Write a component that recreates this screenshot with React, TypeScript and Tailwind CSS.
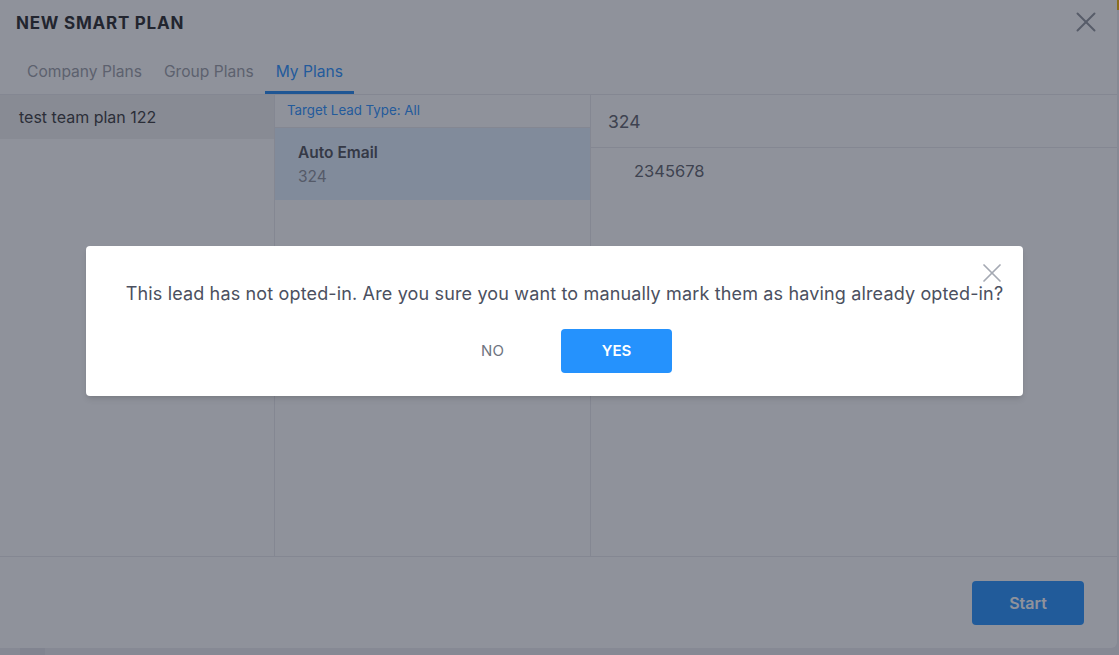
import { X } from "lucide-react";

const tabs = ["Company Plans", "Group Plans", "My Plans"];

export default function App() {
  return (
    <div className="relative h-[655px] w-[1119px] overflow-hidden bg-[#ededf1] font-['Inter',sans-serif]">
      {/* page behind the plan modal */}
      <div className="absolute right-0 top-0 h-[10px] w-[2px] bg-[#f0b400]" />
      <div className="absolute bottom-0 left-[20px] h-[7px] w-[25px] bg-[#e2e2e8]" />

      {/* plan modal */}
      <div className="flex h-[648px] w-[1117px] flex-col rounded-br-md bg-white">
        <header className="flex h-[44px] items-center justify-between pl-4 pr-[14px]">
          <h1 className="pt-[3px] text-[17px] font-bold tracking-[0.045em] text-[#252527]">NEW SMART PLAN</h1>
          <X className="h-[34px] w-[34px] text-[#8f939b]" strokeWidth={1.4} />
        </header>

        <nav className="flex h-[51px] border-b border-[#e8e8ec] pl-4">
          {tabs.map((t) => {
            const active = t === "My Plans";
            return (
              <div
                key={t}
                className={
                  active
                    ? "flex h-full items-center border-b-[3px] border-[#1f86f0] px-[11px] pt-[8px] text-[15.6px] text-[#2790ff]"
                    : "flex h-full items-center border-b-[3px] border-transparent px-[11px] pt-[8px] text-[15.6px] text-[#9a9ca5]"
                }
              >
                {t}
              </div>
            );
          })}
        </nav>

        <section className="flex flex-1 border-b border-[#e8e8ec]">
          <div className="w-[275px] border-r border-[#e8e8ec]">
            <div className="flex h-[44px] items-center bg-[#f1f1f1] px-[19px] text-[16px] text-[#373739]">
              test team plan 122
            </div>
          </div>
          <div className="w-[316px] border-r border-[#e8e8ec]">
            <div className="flex h-[33px] items-center border-b border-[#e8e8ec] px-3 text-[13.3px] text-[#2790ff]">
              Target Lead Type: All
            </div>
            <div className="h-[72px] bg-[#e3f1ff] px-[23px] pt-[13px] text-[15.5px] leading-[24px]">
              <p className="font-semibold text-[#4a4d55]">Auto Email</p>
              <p className="text-[#8b8f99]">324</p>
            </div>
          </div>
          <div className="flex-1">
            <div className="flex h-[53px] items-center border-b border-[#e8e8ec] px-[17px] pt-[3px] text-[17.5px] text-[#5d5f69]">
              324
            </div>
            <p className="pl-[43px] pt-[11px] text-[16.5px] leading-[24px] text-[#5d5f69]">2345678</p>
          </div>
        </section>

        <footer className="flex h-[91px] items-center justify-end pr-[33px]">
          <button className="h-[44px] w-[112px] rounded bg-[#2391fd] text-[16px] font-semibold text-white">
            Start
          </button>
        </footer>
      </div>

      {/* dimming layer */}
      <div className="absolute inset-0 bg-[rgba(31,37,55,0.5)]" />

      {/* confirm dialog */}
      <div className="absolute left-[86px] top-[246px] flex h-[150px] w-[937px] flex-col items-center rounded bg-white pt-[36px] shadow-md">
        <X className="absolute right-[15px] top-[11px] h-[32px] w-[32px] text-[#a5a9b3]" strokeWidth={1.3} />
        <p className="ml-[20px] text-[18px] leading-[24px] tracking-[0.15px] text-[#4b5060]">
          This lead has not opted-in. Are you sure you want to manually mark them as having already opted-in?
        </p>
        <div className="mt-[23px] flex gap-[13px]">
          <button className="h-[44px] w-[111px] rounded text-[15px] text-[#6f7480]">NO</button>
          <button className="h-[44px] w-[111px] rounded bg-[#2592fd] text-[15px] font-semibold text-white">YES</button>
        </div>
      </div>
    </div>
  );
}
